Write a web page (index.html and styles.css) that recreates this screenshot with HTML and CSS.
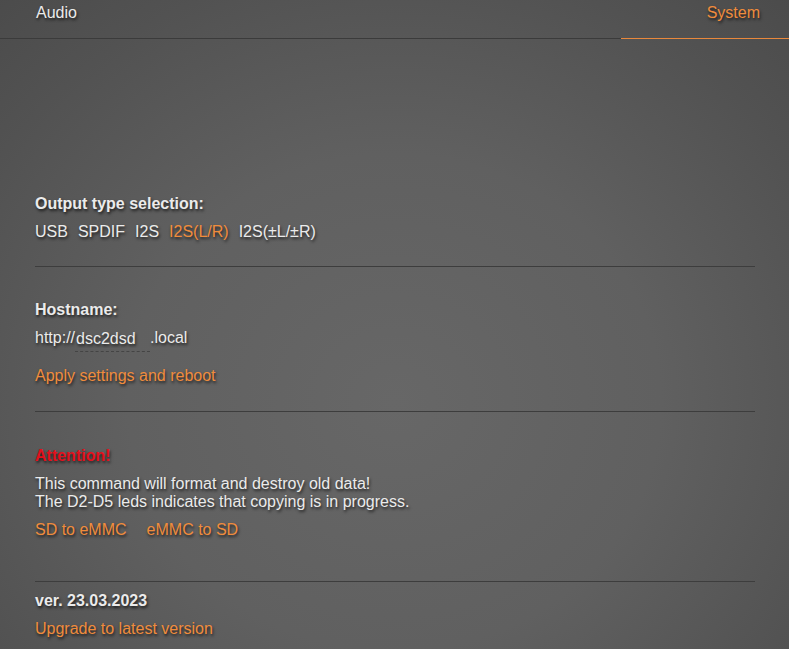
FILE: index.html
```html
<!DOCTYPE html>
<html>
<head>
<meta charset="UTF-8">
  <title>dsc2dsd</title>
  <link rel="stylesheet" href="styles.css">
</head>
<body>
  <header>
    <div class="tab">Audio</div>
    <div class="tab active">System</div>
  </header>

  <main>
    <div class="section first">
      <div class="title">Output type selection:</div>
      <div class="options">
        <a>USB</a>
        <a>SPDIF</a>
        <a>I2S</a>
        <a class="selected">I2S(L/R)</a>
        <a>I2S(±L/±R)</a>
      </div>
    </div>

    <div class="section host">
      <div class="title">Hostname:</div>
      <div class="host-row">
        <span>http://</span><input type="text" class="host-input" value="dsc2dsd"><span>.local</span>
      </div>
      <a class="link apply">Apply settings and reboot</a>
    </div>

    <div class="section copy">
      <div class="title attention">Attention!</div>
      <div class="note">
        This command will format and destroy old data!<br>
        The D2-D5 leds indicates that copying is in progress.
      </div>
      <div class="links">
        <a class="link">SD to eMMC</a>
        <a class="link">eMMC to SD</a>
      </div>
    </div>

    <div class="section last">
      <div class="title">ver. 23.03.2023</div>
      <a class="link">Upgrade to latest version</a>
    </div>
  </main>
</body>
</html>
```

FILE: styles.css
```css
    html {
      height: 100%;
    }

    body {
      margin: 0;
      min-height: 100%;
      font-family: 'Liberation Sans', Arial, Helvetica, sans-serif;
      font-size: 16px;
      color: #ebebeb;
      background: radial-gradient(ellipse 75% 85% at 50% 62%, #676767 0%, #606060 45%, #525252 80%, #4b4b4b 100%);
      text-shadow: 1px 2px 3px rgba(0, 0, 0, 0.7);
    }

    header {
      display: flex;
      justify-content: space-between;
      height: 38px;
      border-bottom: 1px solid #3b3b3b;
    }

    .tab {
      line-height: 24px;
      padding-top: 1px;
      padding-left: 36px;
      cursor: pointer;
    }

    .tab.active {
      width: 168px;
      box-sizing: border-box;
      height: 39px;
      padding-left: 0;
      padding-right: 29px;
      text-align: right;
      color: #f08c3c;
      border-bottom: 1px solid #e8883c;
    }

    main {
      padding: 151px 34px 0 35px;
    }

    .section {
      padding: 28px 0 20px;
      border-bottom: 1px solid #3d3d3d;
    }

    .section.first {
      padding-top: 0;
    }

    .section.host {
      padding-top: 29px;
      padding-bottom: 21px;
    }

    .section.copy {
      padding-top: 30px;
      padding-bottom: 37px;
    }

    .section.last {
      padding-top: 5px;
      border-bottom: none;
    }

    .title {
      font-weight: bold;
      line-height: 28px;
    }

    .attention {
      color: #e3101c;
    }

    .options {
      display: flex;
      gap: 10px;
      line-height: 28px;
    }

    .options a {
      cursor: pointer;
    }

    .options a.selected {
      color: #f08c3c;
    }

    .host-row {
      line-height: 28px;
      display: flex;
      align-items: center;
    }

    .host-input {
      width: 75px;
      padding: 0 0 0 1px;
      margin: 2px 0 0;
      height: 26px;
      font-family: inherit;
      font-size: 16px;
      color: #ebebeb;
      text-shadow: 1px 2px 3px rgba(0, 0, 0, 0.7);
      background: transparent;
      border: none;
      border-bottom: 1px dashed #444;
      outline: none;
      box-sizing: border-box;
    }

    .link {
      display: block;
      line-height: 28px;
      color: #f08c3c;
      cursor: pointer;
    }

    .apply {
      margin-top: 10px;
    }

    .note {
      line-height: 18px;
      margin-top: 5px;
    }

    .links {
      display: flex;
      gap: 20px;
      margin-top: 5px;
    }
```
